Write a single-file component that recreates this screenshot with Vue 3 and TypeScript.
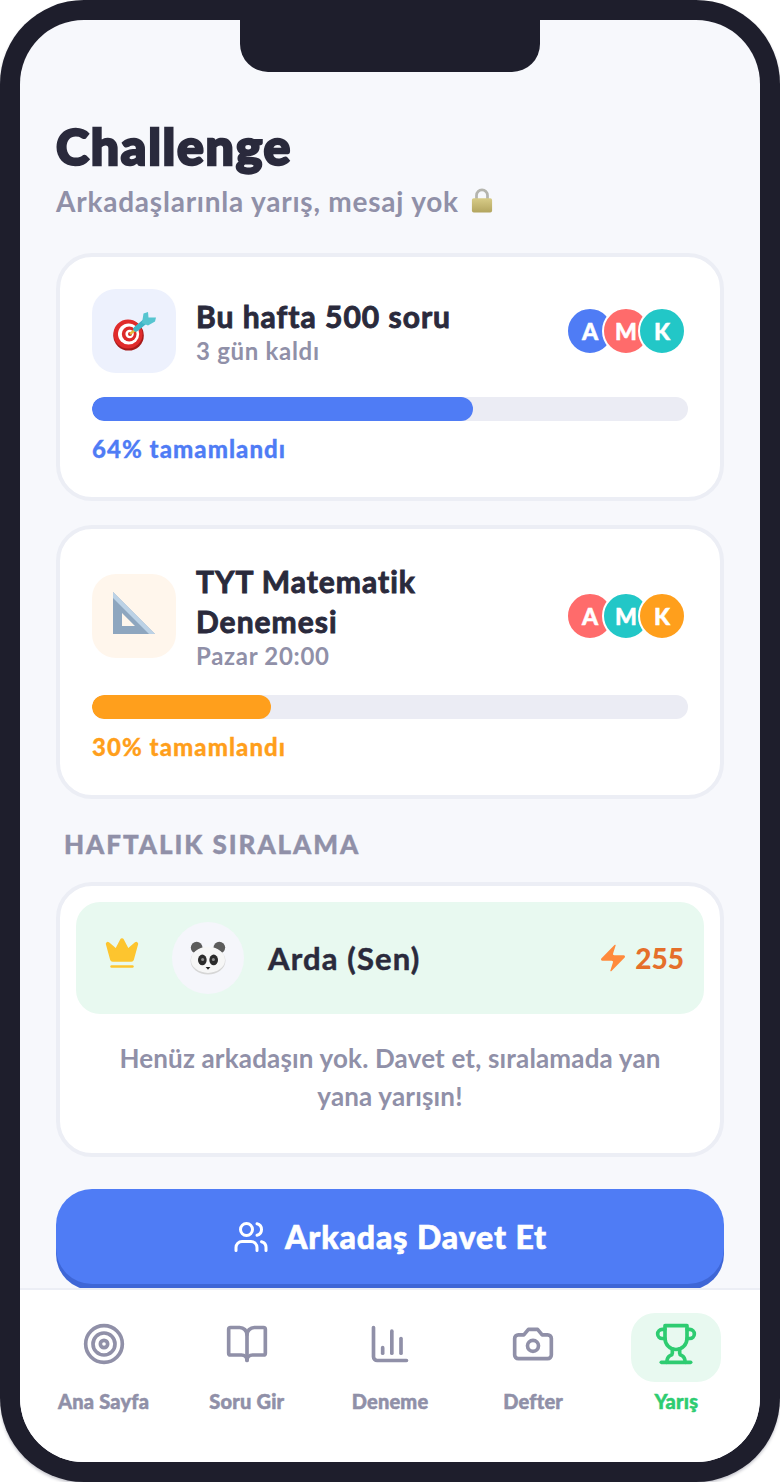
<script setup lang="ts">
interface Challenge {
  title: string[]
  sub: string
  pct: number
  color: string
  tint: string
  icon: 'dart' | 'square'
  people: { l: string; c: string }[]
}

const blue = '#4f7cf5'
const coral = '#ff6b6b'
const teal = '#22c7c7'
const orange = '#ff9f1c'

const challenges: Challenge[] = [
  {
    title: ['Bu hafta 500 soru'],
    sub: '3 gün kaldı',
    pct: 64,
    color: blue,
    tint: '#edf1fd',
    icon: 'dart',
    people: [{ l: 'A', c: blue }, { l: 'M', c: coral }, { l: 'K', c: teal }],
  },
  {
    title: ['TYT Matematik', 'Denemesi'],
    sub: 'Pazar 20:00',
    pct: 30,
    color: orange,
    tint: '#fff6ec',
    icon: 'square',
    people: [{ l: 'A', c: coral }, { l: 'M', c: teal }, { l: 'K', c: orange }],
  },
]

const tabs = [
  { label: 'Ana Sayfa', icon: 'target' },
  { label: 'Soru Gir', icon: 'book' },
  { label: 'Deneme', icon: 'chart' },
  { label: 'Defter', icon: 'camera' },
  { label: 'Yarış', icon: 'trophy' },
]
</script>

<template>
  <div class="phone">
    <div class="screen">
      <div class="notch"></div>
      <main class="content">
        <h1 class="title">Challenge</h1>
        <p class="subtitle">
          Arkadaşlarınla yarış, mesaj yok
          <svg class="lock" viewBox="0 0 24 28">
            <defs>
              <linearGradient id="lock-body" x1="0" y1="0" x2="0" y2="1">
                <stop offset="0%" stop-color="#d8cc88" />
                <stop offset="100%" stop-color="#b3a55f" />
              </linearGradient>
            </defs>
            <path d="M6 13V9a6 6 0 0 1 12 0v4" fill="none" stroke="#b5b5ae" stroke-width="3" />
            <rect x="1" y="12" width="22" height="15.5" rx="2" fill="url(#lock-body)" />
          </svg>
        </p>

        <section v-for="c in challenges" :key="c.sub" class="card challenge">
          <div class="head">
            <div class="emoji-box" :style="{ background: c.tint }">
              <svg v-if="c.icon === 'dart'" class="emoji" viewBox="0 0 44 44">
                <circle cx="16.6" cy="26.4" r="15.2" fill="#a51a1a" />
                <circle cx="16" cy="25" r="14.6" fill="#e02b2b" />
                <circle cx="16.6" cy="25" r="10.6" fill="#fff" />
                <circle cx="17.2" cy="25" r="7.4" fill="#dc2a2a" />
                <circle cx="17.6" cy="25" r="4.2" fill="#fff" />
                <circle cx="18" cy="25" r="2" fill="#d92626" />
                <path d="M18 25 L26 18.5" stroke="#e6bb3c" stroke-width="2.6" />
                <path d="M24 20 L33 12.5" stroke="#3fb4c6" stroke-width="5.5" stroke-linecap="round" />
                <path d="M30 14 L31.5 4.5 L36 3 L36.5 8.5 L44 8.5 L43 12.5 L36 16.5 Z" fill="#56c5d0" />
              </svg>
              <svg v-else class="emoji" viewBox="-1 2 44 44">
                <path fill-rule="evenodd" d="M0 0 L42 42 H0 Z M9 21 V34 H22 Z" fill="#8ea6bf" />
                <path d="M0 0 L42 42 L36 42 L0 6 Z" fill="#bcd2e6" />
              </svg>
            </div>
            <div class="info">
              <div class="name">
                <div v-for="line in c.title" :key="line">{{ line }}</div>
              </div>
              <div class="sub">{{ c.sub }}</div>
            </div>
            <div class="people">
              <span v-for="p in c.people" :key="p.l" class="avatar" :style="{ background: p.c }">{{ p.l }}</span>
            </div>
          </div>
          <div class="track">
            <div class="fill" :style="{ width: c.pct + '%', background: c.color }"></div>
          </div>
          <div class="pct" :style="{ color: c.color }">{{ c.pct }}% tamamlandı</div>
        </section>

        <h2 class="section">HAFTALIK SIRALAMA</h2>

        <section class="card board">
          <div class="me">
            <svg class="crown" viewBox="0 0 24 24" fill="#fdc52f" stroke="#fdc52f" stroke-width="1.6" stroke-linecap="round" stroke-linejoin="round">
              <path d="M11.562 3.266a.5.5 0 0 1 .876 0L15.39 8.87a1 1 0 0 0 1.516.294L21.183 5.5a.5.5 0 0 1 .798.519l-2.834 10.246a1 1 0 0 1-.956.734H5.81a1 1 0 0 1-.957-.734L2.02 6.02a.5.5 0 0 1 .798-.519l4.276 3.664a1 1 0 0 0 1.516-.294z" />
              <path d="M5 21h14" />
            </svg>
            <div class="face">
              <svg class="panda" viewBox="0 0 40 36">
                <circle cx="8" cy="7" r="6.2" fill="#5c5c5c" />
                <circle cx="32" cy="7" r="6.2" fill="#5c5c5c" />
                <ellipse cx="20" cy="21" rx="18.5" ry="14.5" fill="#d6d6d6" />
                <ellipse cx="20" cy="20" rx="18" ry="13.8" fill="#f6f6f6" />
                <ellipse cx="14" cy="20" rx="4.6" ry="5.6" fill="#2b2b2b" />
                <ellipse cx="26" cy="20" rx="4.6" ry="5.6" fill="#2b2b2b" />
                <circle cx="14.3" cy="19.5" r="1.6" fill="#8d8d8d" />
                <circle cx="25.7" cy="19.5" r="1.6" fill="#8d8d8d" />
                <path d="M17.5 27.5h5L20 30.5z" fill="#222" />
              </svg>
            </div>
            <span class="me-name">Arda (Sen)</span>
            <span class="score">
              <svg class="zap" viewBox="0 0 24 24" fill="#ff8a3c">
                <path d="M4 14a1 1 0 0 1-.78-1.63l9.9-10.2a.5.5 0 0 1 .86.46l-1.92 6.02A1 1 0 0 0 13 10h7a1 1 0 0 1 .78 1.63l-9.9 10.2a.5.5 0 0 1-.86-.46l1.92-6.02A1 1 0 0 0 11 14z" />
              </svg>
              255
            </span>
          </div>
          <p class="empty">Henüz arkadaşın yok. Davet et, sıralamada yan yana yarışın!</p>
        </section>

        <button class="invite">
          <svg class="users" viewBox="0 0 24 24" fill="none" stroke="#fff" stroke-width="2" stroke-linecap="round" stroke-linejoin="round">
            <path d="M16 21v-2a4 4 0 0 0-4-4H6a4 4 0 0 0-4 4v2" />
            <circle cx="9" cy="7" r="4" />
            <path d="M22 21v-2a4 4 0 0 0-3-3.87" />
            <path d="M16 3.13a4 4 0 0 1 0 7.75" />
          </svg>
          Arkadaş Davet Et
        </button>
      </main>

      <nav class="tabs">
        <div v-for="t in tabs" :key="t.label" class="tab" :class="{ active: t.icon === 'trophy' }">
          <div class="tab-icon">
            <svg viewBox="0 0 24 24" fill="none" stroke="currentColor" stroke-width="2" stroke-linecap="round" stroke-linejoin="round">
              <template v-if="t.icon === 'target'">
                <circle cx="12" cy="12" r="10" />
                <circle cx="12" cy="12" r="6" />
                <circle cx="12" cy="12" r="2" />
              </template>
              <template v-else-if="t.icon === 'book'">
                <path d="M12 7v14" />
                <path d="M3 18a1 1 0 0 1-1-1V4a1 1 0 0 1 1-1h5a4 4 0 0 1 4 4 4 4 0 0 1 4-4h5a1 1 0 0 1 1 1v13a1 1 0 0 1-1 1h-6a3 3 0 0 0-3 3 3 3 0 0 0-3-3z" />
              </template>
              <template v-else-if="t.icon === 'chart'">
                <path d="M3 3v16a2 2 0 0 0 2 2h16" />
                <path d="M8 17v-3" />
                <path d="M13 17V5" />
                <path d="M18 17V9" />
              </template>
              <template v-else-if="t.icon === 'camera'">
                <path d="M14.5 4h-5L7 7H4a2 2 0 0 0-2 2v9a2 2 0 0 0 2 2h16a2 2 0 0 0 2-2V9a2 2 0 0 0-2-2h-3l-2.5-3z" />
                <circle cx="12" cy="13" r="3" />
              </template>
              <template v-else>
                <path d="M6 9H4.5a2.5 2.5 0 0 1 0-5H6" />
                <path d="M18 9h1.5a2.5 2.5 0 0 0 0-5H18" />
                <path d="M4 22h16" />
                <path d="M10 14.66V17c0 .55-.47.98-.97 1.21C7.85 18.75 7 20.24 7 22" />
                <path d="M14 14.66V17c0 .55.47.98.97 1.21C16.15 18.75 17 20.24 17 22" />
                <path d="M18 2H6v7a6 6 0 0 0 12 0V2Z" />
              </template>
            </svg>
          </div>
          <span class="tab-label">{{ t.label }}</span>
        </div>
      </nav>
    </div>
  </div>
</template>

<style>
html, body { background: #fff; }
</style>

<style scoped>
.phone {
  width: 780px;
  height: 1482px;
  box-sizing: border-box;
  padding: 20px;
  background: #1e1e2c;
  border-radius: 84px;
  box-shadow: 0 2px 3px rgba(30, 30, 60, .25);
  overflow: hidden;
}
.screen {
  position: relative;
  height: 100%;
  display: flex;
  flex-direction: column;
  background: #f7f8fc;
  border-radius: 64px;
  overflow: hidden;
  font-family: "Lato", "Noto Sans", sans-serif;
}
.notch {
  position: absolute;
  top: 0;
  left: 220px;
  width: 300px;
  height: 52px;
  background: #1e1e2c;
  border-radius: 0 0 28px 28px;
}
.content {
  flex: 1;
  min-height: 0;
  overflow: hidden;
  padding: 96px 36px 0;
  display: flex;
  flex-direction: column;
}
.title {
  margin: 0;
  font-size: 50px;
  line-height: 60px;
  font-weight: 900;
  letter-spacing: 1.75px;
  color: #2a2a3c;
  -webkit-text-stroke: 2.4px #2a2a3c;
}
.subtitle {
  margin: 5px 0 0;
  font-size: 28px;
  line-height: 40px;
  font-weight: 700;
  letter-spacing: .78px;
  color: #9090a8;
  display: flex;
  align-items: center;
  gap: 12px;
}
.lock { width: 22px; height: 26px; margin-top: -2px; }
.card {
  background: #fff;
  border: 4px solid #eceef5;
  border-radius: 36px;
  box-sizing: border-box;
}
.challenge {
  margin-top: 32px;
  padding: 32px;
}
.challenge + .challenge { margin-top: 24px; }
.head {
  display: flex;
  align-items: center;
  gap: 20px;
}
.emoji-box {
  width: 84px;
  height: 84px;
  flex: none;
  border-radius: 24px;
  display: flex;
  align-items: center;
  justify-content: center;
}
.emoji { width: 44px; height: 44px; overflow: visible; }
.info { flex: 1; min-width: 0; }
.name {
  font-size: 30px;
  line-height: 40px;
  font-weight: 700;
  letter-spacing: 1px;
  color: #2a2a3c;
  -webkit-text-stroke: 0.9px #2a2a3c;
}
.sub {
  font-size: 24px;
  line-height: 30px;
  font-weight: 700;
  letter-spacing: .7px;
  color: #9090a8;
}
.people {
  display: flex;
  padding-right: 2px;
}
.avatar {
  width: 44px;
  height: 44px;
  flex: none;
  box-sizing: content-box;
  border: 2px solid #fff;
  border-radius: 50%;
  margin-left: -12px;
  color: #fff;
  font-size: 23px;
  font-weight: 900;
  -webkit-text-stroke: 0.5px #fff;
  display: flex;
  align-items: center;
  justify-content: center;
}
.track {
  margin-top: 24px;
  height: 24px;
  border-radius: 12px;
  background: #ebecf4;
  overflow: hidden;
}
.fill { height: 100%; border-radius: 12px; }
.pct {
  margin-top: 12px;
  font-size: 24px;
  line-height: 32px;
  font-weight: 900;
  letter-spacing: 1.05px;
  -webkit-text-stroke: 0.3px currentColor;
}
.section {
  margin: 29px 0 0 8px;
  font-size: 26px;
  line-height: 32px;
  letter-spacing: 1.95px;
  font-weight: 900;
  color: #9090a8;
  -webkit-text-stroke: 0.4px #9090a8;
}
.board {
  margin-top: 22px;
  padding: 16px 16px 38px;
}
.me {
  height: 112px;
  border-radius: 24px;
  background: #e8f9f0;
  display: flex;
  align-items: center;
  padding: 0 20px 0 28px;
}
.crown { width: 36px; height: 36px; margin-top: -10px; }
.face {
  width: 72px;
  height: 72px;
  margin-left: 32px;
  border-radius: 50%;
  background: #f5f6fb;
  display: flex;
  align-items: center;
  justify-content: center;
}
.panda { width: 38px; height: 34px; }
.me-name {
  flex: 1;
  margin-left: 24px;
  font-size: 31px;
  font-weight: 700;
  letter-spacing: 1.15px;
  color: #2a2a3c;
  -webkit-text-stroke: 0.5px #2a2a3c;
}
.score {
  display: flex;
  align-items: center;
  gap: 6px;
  font-size: 28px;
  font-weight: 900;
  color: #e56f2a;
}
.zap { width: 32px; height: 32px; }
.empty {
  margin: 25px 24px 0;
  font-size: 26px;
  line-height: 38px;
  font-weight: 700;
  letter-spacing: .17px;
  color: #9090a8;
  text-align: center;
}
.invite {
  margin-top: 32px;
  flex: none;
  height: 95px;
  border: 0;
  border-radius: 36px;
  background: #4f7cf5;
  box-shadow: 0 6px 0 #3e66d6;
  color: #fff;
  font-family: inherit;
  font-size: 32px;
  font-weight: 900;
  letter-spacing: .9px;
  -webkit-text-stroke: 0.6px #fff;
  display: flex;
  align-items: center;
  justify-content: center;
  gap: 16px;
}
.users { width: 36px; height: 36px; }
.tabs {
  flex: none;
  height: 174px;
  box-sizing: border-box;
  border-top: 2px solid #eceef5;
  background: #fff;
  display: grid;
  grid-template-columns: repeat(5, 1fr);
  padding: 0 12px;
}
.tab {
  display: flex;
  flex-direction: column;
  align-items: center;
  color: #9090a8;
}
.tab-icon {
  width: 90px;
  height: 69px;
  margin-top: 23px;
  padding-top: 9px;
  box-sizing: border-box;
  display: flex;
  align-items: flex-start;
  justify-content: center;
  border-radius: 24px;
}
.tab-icon svg { width: 44px; height: 44px; }
.tab-label {
  margin-top: 7px;
  font-size: 20px;
  line-height: 24px;
  font-weight: 900;
  letter-spacing: .2px;
  -webkit-text-stroke: 0.5px currentColor;
}
.active { color: #2ecc71; }
.active .tab-icon { background: #e8f9f0; }
</style>
